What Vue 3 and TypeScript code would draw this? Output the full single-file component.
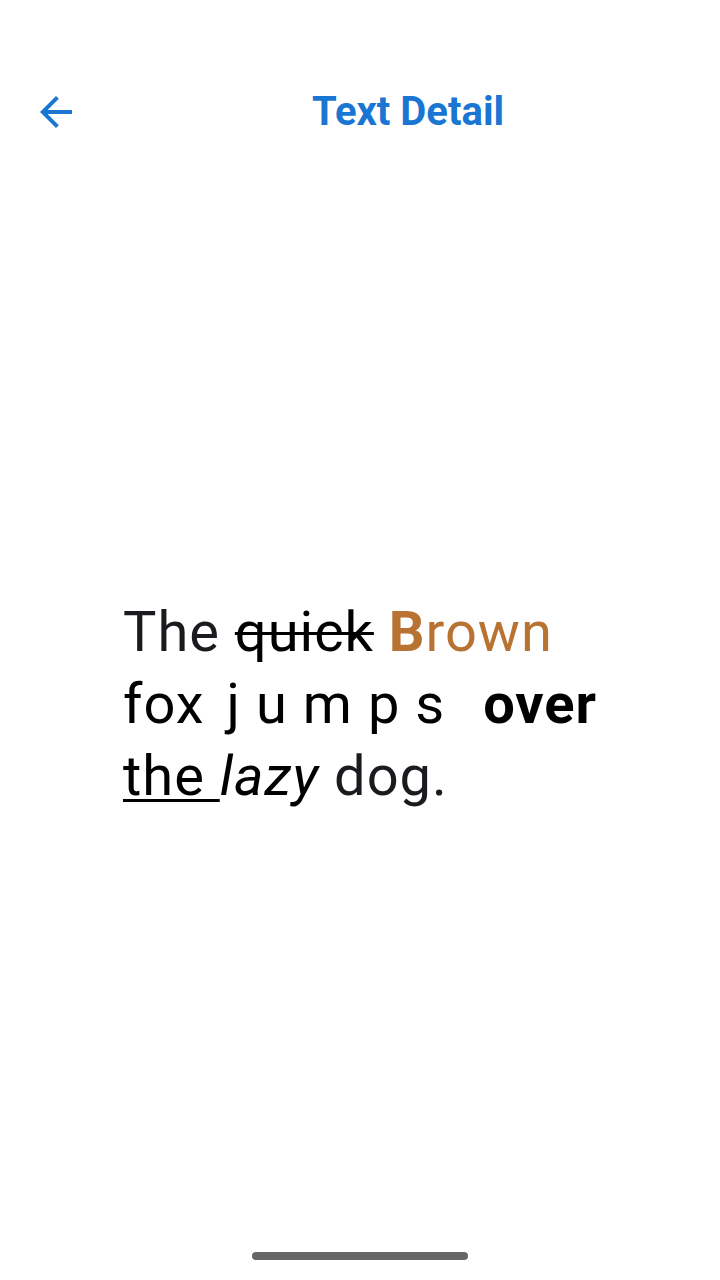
<script setup lang="ts">
const title: string = 'Text Detail'

function goBack(): void {
  window.history.back()
}
</script>

<template>
  <div class="screen">
    <header class="app-bar">
      <button class="back" type="button" aria-label="Back" @click="goBack">
        <svg viewBox="0 0 24 24" width="48" height="48" aria-hidden="true">
          <path fill="currentColor" d="M20 11H7.83l5.59-5.59L12 4l-8 8 8 8 1.41-1.41L7.83 13H20v-2z" />
        </svg>
      </button>
      <h1 class="title">{{ title }}</h1>
    </header>
    <main class="content">
      <p class="sample">The <s>quick</s> <span class="brown"><b>B</b>rown</span> <span class="ink">fox <span class="spaced">jumps </span><b>over</b> <u>the </u><i>lazy</i></span> dog.</p>
    </main>
    <div class="home-indicator"></div>
  </div>
</template>

<style scoped>
.screen {
  box-sizing: border-box;
  min-height: 100vh;
  display: flex;
  flex-direction: column;
  align-items: center;
  padding: 56px 0 20px;
  background: #fff;
  font-family: Roboto, sans-serif;
  color: #1b1b1f;
}
.app-bar {
  box-sizing: border-box;
  align-self: stretch;
  display: flex;
  align-items: center;
  height: 112px;
  padding: 0 8px;
  color: #1976d2;
}
.back {
  display: flex;
  align-items: center;
  justify-content: center;
  width: 96px;
  height: 96px;
  padding: 0;
  border: 0;
  background: none;
  color: inherit;
}
.back svg {
  display: block;
}
.title {
  flex: 1;
  margin: 0;
  text-align: center;
  font-size: 40px;
  line-height: 48px;
  font-weight: 700;
}
.content {
  flex: 1;
  display: flex;
  align-items: center;
  padding: 0 0 12px 8px;
}
.sample {
  max-width: 482px;
  margin: 0;
  font-size: 56px;
  line-height: 72px;
  letter-spacing: 1px;
}
.sample s,
.sample u {
  text-decoration-thickness: 3px;
}
.sample u {
  text-underline-offset: 4px;
}
.sample s,
.ink {
  color: #000;
}
.brown {
  color: #b87333;
}
.spaced {
  margin: 0 -7px 0 7px;
  letter-spacing: 16px;
}
.home-indicator {
  width: 30%;
  height: 8px;
  border-radius: 4px;
  background: #666;
}
</style>
